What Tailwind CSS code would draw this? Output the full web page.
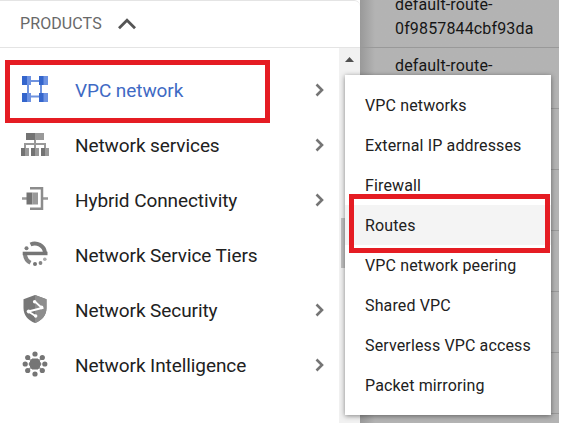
<!DOCTYPE html>
<html lang="en">

<head>
    <meta charset="utf-8" />
    <title>VPC network - Routes</title>
    <script src="https://cdn.jsdelivr.net/npm/@tailwindcss/browser@4"></script>
</head>

<body class="bg-white font-['Roboto',sans-serif] overflow-hidden">
    <div class="relative flex w-[559px] h-[423px] overflow-hidden">
        <!-- Navigation drawer -->
        <nav class="w-[360px] shrink-0 flex flex-col bg-white">
            <header class="h-12 shrink-0 flex items-center gap-4 pl-5 border-t border-b border-[#e4e4e4] rounded-tr-md text-[#686868]">
                <h2 class="w-[82px] text-[16px] tracking-[0.1px] whitespace-nowrap">PRODUCTS</h2>
                <svg class="w-[18px] h-3 mb-px" viewBox="0 0 18 12" fill="none" stroke="#555" stroke-width="2.8">
                    <path d="M1 10.2 9 2.2 17 10.2" />
                </svg>
            </header>

            <div class="flex-1 flex">
                <ul class="flex-1 pt-[15px] text-[19px] tracking-[-0.08px] text-[#212121] whitespace-nowrap">
                    <li class="h-[55px] flex items-center pl-[22px] pr-3.5 text-[#3f6ac4]">
                        <svg class="size-[26px] mr-[27px] mb-[3px]" viewBox="0 0 26 26">
                            <path d="M9 5h8M9 20.500h8M6 9v8M19 9v8" stroke="#6f93df" stroke-width="2" />
                            <path d="M0 0h9v9H0zM17 0h9v9h-9zM0 17h9v9H0zM17 17h9v9h-9z" fill="#3465cc" />
                            <path d="M5 0h4v9H5zM21.500 0h4.500v9h-4.500zM5 17h4v9H5zM21.500 17h4.500v9h-4.500z" fill="#6d92e2" />
                        </svg>
                        <span class="flex-1 pt-px">VPC network</span>
                        <svg class="w-2.5 h-3.5 mb-px" viewBox="0 0 10 14" fill="none" stroke="#757575" stroke-width="2.6"><path d="M1.500 1.500 7 7 1.500 12.500" /></svg>
                    </li>
                    <li class="h-[55px] flex items-center pl-[22px] pr-3.5">
                        <svg class="size-[26px] mr-[27px] mb-px overflow-visible" viewBox="0 0 26 26">
                            <path d="M13 8v9M3 17v-5h20v5" fill="none" stroke="#999" stroke-width="2" />
                            <path d="M4 1h18v7H4zM-1 16h8v8h-8zM9 16h8v8H9zM19 16h8v8h-8z" fill="#737373" />
                            <path d="M13 1h9v7h-9zM3 16h4v8H3zM13 16h4v8h-4zM23 16h4v8h-4z" fill="#999" />
                        </svg>
                        <span class="flex-1 pt-px">Network services</span>
                        <svg class="w-2.5 h-3.5 mb-px" viewBox="0 0 10 14" fill="none" stroke="#757575" stroke-width="2.6"><path d="M1.500 1.500 7 7 1.500 12.500" /></svg>
                    </li>
                    <li class="h-[55px] flex items-center pl-[22px] pr-3.5">
                        <svg class="size-[26px] mr-[27px] mb-[3px]" viewBox="0 0 26 26">
                            <path d="M0 12.500h5M20 12.500h6" stroke="#999" stroke-width="2.500" />
                            <path d="M4.500 6.500h6v12h-6z" fill="#737373" />
                            <path d="M10.500 6.500H16v12h-5.500z" fill="#999" />
                            <path d="M8 2.200h12v20.600H8" fill="none" stroke="#8c8c8c" stroke-width="2.500" />
                        </svg>
                        <span class="flex-1 pt-px">Hybrid Connectivity</span>
                        <svg class="w-2.5 h-3.5 mb-px" viewBox="0 0 10 14" fill="none" stroke="#757575" stroke-width="2.6"><path d="M1.500 1.500 7 7 1.500 12.500" /></svg>
                    </li>
                    <li class="h-[55px] flex items-center pl-[22px] pr-3.5">
                        <svg class="size-[26px] mr-[27px] mb-[3px]" viewBox="0 0 26 26">
                            <path d="M8.500 3.500A10.300 10.300 0 0 1 23 11.500" fill="none" stroke="#7a7a7a" stroke-width="4" />
                            <path d="M3 13.500A10.300 10.300 0 0 0 8.500 21.800" fill="none" stroke="#858585" stroke-width="4" />
                            <path d="M.7 10.700h24.800v3.500H.7z" fill="#757575" />
                            <circle cx="4.500" cy="7.300" r="2" fill="#7d7d7d" />
                            <circle cx="13" cy="23" r="2" fill="#757575" />
                            <circle cx="18.500" cy="22" r="1.900" fill="#858585" />
                            <circle cx="22.800" cy="18.300" r="1.800" fill="#aaa" />
                        </svg>
                        <span class="flex-1 pt-px">Network Service Tiers</span>
                    </li>
                    <li class="h-[55px] flex items-center pl-[22px] pr-3.5">
                        <svg class="w-[26px] h-7 mr-[27px] mb-[3px]" viewBox="0 0 26 26" preserveAspectRatio="none">
                            <path d="M13 0 24.500 4v8c0 6.500-4.500 11.500-11.500 14C6 23.500 1.500 18.500 1.500 12V4z" fill="#777" />
                            <path d="M13 0 24.500 4v8c0 6.500-4.500 11.500-11.500 14z" fill="#8d8d8d" />
                            <path d="M12.800 6 20 12 6.500 15.300 14 19.800" fill="none" stroke="#fff" stroke-width="1.800" />
                            <g fill="#fff">
                                <circle cx="12.600" cy="6.300" r="1.700" />
                                <circle cx="19.600" cy="11.500" r="1.800" />
                                <circle cx="6.700" cy="15.300" r="1.800" />
                                <circle cx="13.700" cy="19.500" r="1.700" />
                            </g>
                        </svg>
                        <span class="flex-1 pt-px">Network Security</span>
                        <svg class="w-2.5 h-3.5 mb-px" viewBox="0 0 10 14" fill="none" stroke="#757575" stroke-width="2.6"><path d="M1.500 1.500 7 7 1.500 12.500" /></svg>
                    </li>
                    <li class="h-[55px] flex items-center pl-[22px] pr-3.5">
                        <svg class="size-[26px] mr-[27px] mb-[3px]" viewBox="0 0 26 26" fill="#757575">
                            <path d="M6 7 20 19M20 7 6 19" stroke="#999" stroke-width="1.500" />
                            <path d="M10 8h6l3 5-3 5h-6l-3-5z" stroke="#757575" stroke-width="1" />
                            <circle cx="13" cy="3" r="2.600" />
                            <circle cx="13" cy="23" r="2.600" />
                            <circle cx="3.200" cy="13" r="2.600" />
                            <circle cx="22.800" cy="13" r="2.600" />
                            <circle cx="5.700" cy="6.500" r="2.600" />
                            <circle cx="20.300" cy="6.500" r="2.600" />
                            <circle cx="5.700" cy="19.500" r="2.600" />
                            <circle cx="20.300" cy="19.500" r="2.600" />
                        </svg>
                        <span class="flex-1 pt-px">Network Intelligence</span>
                        <svg class="w-2.5 h-3.5 mb-px" viewBox="0 0 10 14" fill="none" stroke="#757575" stroke-width="2.6"><path d="M1.500 1.500 7 7 1.500 12.500" /></svg>
                    </li>
                </ul>

                <!-- Scrollbar -->
                <div class="w-[21px] bg-[#f1f1f1] flex flex-col items-center pt-[9px]">
                    <svg class="w-[9px] h-[5px]" viewBox="0 0 9 5"><path d="M0 5 4.500 0 9 5z" fill="#505050" /></svg>
                    <div class="mt-[156px] w-[17px] h-[50px] bg-[#c1c1c1]"></div>
                </div>
            </div>
        </nav>

        <!-- Routes table behind the drawer -->
        <main class="flex-1 flex flex-col bg-linear-to-r from-[#999] to-[#b3b3b3] to-[15px] text-[16px] leading-[24px] text-[#161616] tracking-[0.15px]">
            <div class="h-12 shrink-0 flex flex-col justify-end pl-[35px] pb-1.5 border-b border-[#999]">
                <p>default-route-<br />0f9857844cbf93da</p>
            </div>
            <div class="h-[61px] shrink-0 pl-[35px] pt-[6px] border-b border-[#999]">default-route-</div>
            <div class="h-[61px] shrink-0 border-b border-[#999]"></div>
            <div class="h-[61px] shrink-0 border-b border-[#999]"></div>
            <div class="h-[61px] shrink-0 border-b border-[#999]"></div>
            <div class="h-[61px] shrink-0 border-b border-[#999]"></div>
            <div class="h-[61px] shrink-0 border-b border-[#999]"></div>
        </main>

        <!-- Flyout menu -->
        <ul class="absolute left-[345px] top-[75px] w-[206px] h-[340px] py-2.5 bg-white shadow-[0_1px_5px_rgba(0,0,0,0.45)] text-[16px] text-[#212121] tracking-[0.13px] whitespace-nowrap">
            <li class="h-10 px-5 pt-0.5 flex items-center">VPC networks</li>
            <li class="h-10 px-5 pt-0.5 flex items-center">External IP addresses</li>
            <li class="h-10 px-5 pt-0.5 flex items-center">Firewall</li>
            <li class="h-10 px-5 pt-0.5 flex items-center bg-[#f4f4f4]">Routes</li>
            <li class="h-10 px-5 pt-0.5 flex items-center">VPC network peering</li>
            <li class="h-10 px-5 pt-0.5 flex items-center">Shared VPC</li>
            <li class="h-10 px-5 pt-0.5 flex items-center">Serverless VPC access</li>
            <li class="h-10 px-5 pt-0.5 flex items-center">Packet mirroring</li>
        </ul>

        <!-- Highlight boxes -->
        <div class="absolute left-[5px] top-[60px] w-[265px] h-[63px] border-5 border-[#e51c23]"></div>
        <div class="absolute left-[349px] top-[194px] w-[201px] h-[59px] border-5 border-[#e51c23]"></div>
    </div>
</body>

</html>
